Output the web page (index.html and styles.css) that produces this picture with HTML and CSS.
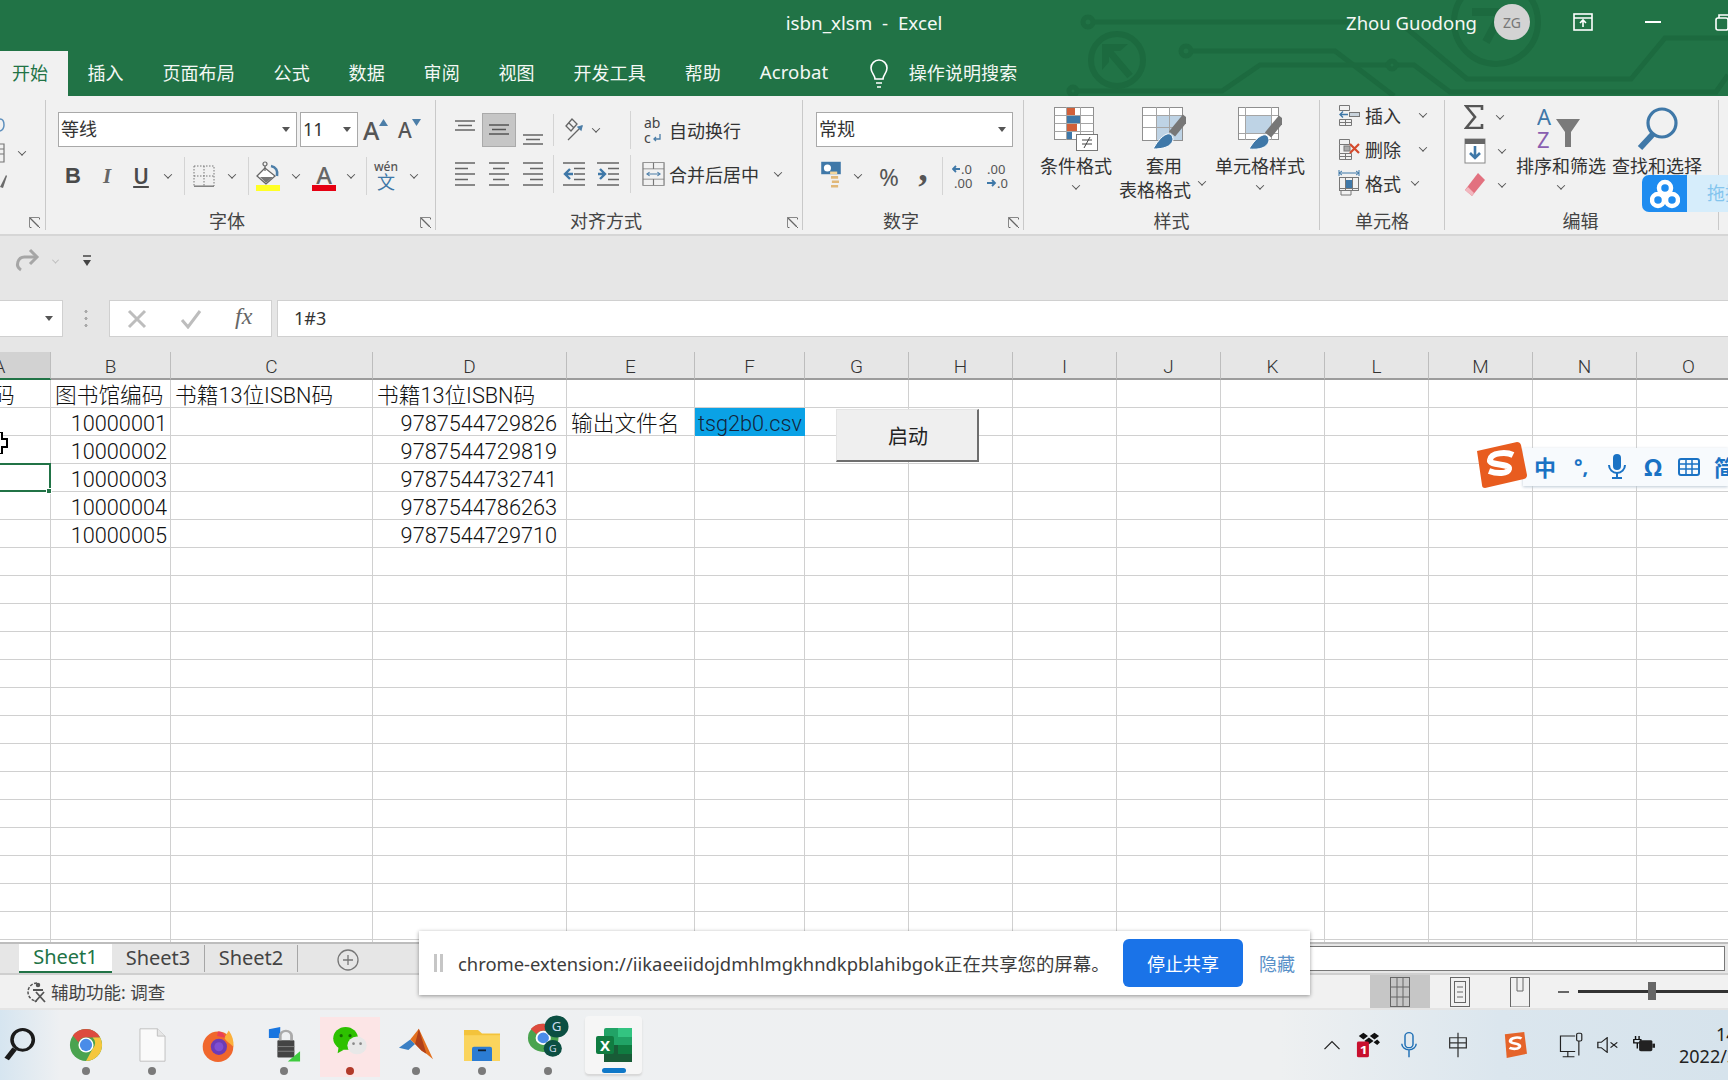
FILE: index.html
```html
<!DOCTYPE html>
<html lang="zh-CN">
<head>
<meta charset="utf-8">
<title>isbn_xlsm - Excel</title>
<link rel="stylesheet" href="styles.css">
</head>
<body>
<div class="app">
  <header class="chrome">
    <svg class="circuit" viewBox="0 0 1728 96" width="1728" height="96" fill="none" stroke="#1c6a3f" stroke-width="5">
      <circle cx="1088" cy="22" r="5"/><path d="M1093 22H1350"/>
      <circle cx="1117" cy="60" r="26" stroke-width="6"/><path d="M1130 76L1108 50" stroke-width="7"/><path d="M1102 70V44h26l-8 7h-11v11z" fill="#1c6a3f" stroke="none"/>
      <circle cx="1186" cy="51" r="5"/><path d="M1191 51H1335L1394 96"/>
      <circle cx="1073" cy="91" r="4"/><path d="M1077 91H1222L1260 65H1388M1396 65h18L1450 92H1716L1728 75"/><circle cx="1392" cy="65" r="4"/>
      <circle cx="1496" cy="22" r="42" stroke-width="6"/><path d="M1472 12h30l-16 30" stroke-width="8"/>
      <path d="M1405 27L1467 79H1631L1665 38H1728"/>
    </svg>
    <div class="titlebar">
      <span class="doc-title">isbn_xlsm&nbsp; -&nbsp; Excel</span>
      <div class="account">
        <span class="user">Zhou Guodong</span>
        <span class="avatar">ZG</span>
        <span class="winbtn"><svg width="20" height="18" viewBox="0 0 20 18" fill="none" stroke="#fff" stroke-width="1.6"><rect x="1" y="1" width="18" height="16"/><path d="M1 5h18M10 14V7M7 10l3-3 3 3"/></svg></span>
        <span class="winbtn"><svg width="16" height="2" viewBox="0 0 16 2"><rect width="16" height="2" fill="#fff"/></svg></span>
        <span class="winbtn"><svg width="16" height="18" viewBox="0 0 16 18" fill="none" stroke="#fff" stroke-width="1.6"><rect x="1" y="5" width="12" height="12" rx="2"/><path d="M4 5V2h11v11h-2"/></svg></span>
      </div>
    </div>
    <nav class="tabs">
      <span class="tab tab-active">开始</span>
      <span class="tab">插入</span>
      <span class="tab">页面布局</span>
      <span class="tab">公式</span>
      <span class="tab">数据</span>
      <span class="tab">审阅</span>
      <span class="tab">视图</span>
      <span class="tab">开发工具</span>
      <span class="tab">帮助</span>
      <span class="tab tab-latin">Acrobat</span>
      <span class="tab tab-search">
        <svg width="20" height="30" viewBox="0 0 20 30" fill="none" stroke="#fff" stroke-width="1.6"><path d="M6 20c0-4-4-6-4-11a8 8 0 0 1 16 0c0 5-4 7-4 11zM7 24h6M8 28h4"/></svg>
        操作说明搜索
      </span>
    </nav>
  </header>

  <section class="ribbon">
    <div class="group g-clip">
      <div class="clip-items">
        <svg width="6" height="14" viewBox="0 0 6 14" fill="none" stroke="#5d8fbd" stroke-width="1.5"><path d="M0 1c3 0 4 3 4 6s-1 5-4 6"/></svg>
        <div class="row-center"><svg width="5" height="20" viewBox="0 0 5 20" fill="none" stroke="#777" stroke-width="1.2"><path d="M0 1h4v18H0M0 6h4M0 11h4"/></svg><span class="chev chev-clip"></span></div>
        <svg width="7" height="14" viewBox="0 0 7 14" fill="#6b6b6b"><path d="M0 13l6-12 1 1-4 12z"/></svg>
      </div>
      <span class="launcher launcher-end"></span>
    </div>

    <div class="group g-font">
      <div class="ctl-row">
        <div class="combo combo-font">等线<span class="drop"></span></div>
        <div class="combo combo-size">11<span class="drop"></span></div>
        <span class="grow-a">A<svg width="9" height="7" viewBox="0 0 9 7"><path d="M4.5 0L9 7H0z" fill="#4c7ea8"/></svg></span>
        <span class="grow-a small-a">A<svg width="9" height="7" viewBox="0 0 9 7"><path d="M4.5 7L9 0H0z" fill="#4c7ea8"/></svg></span>
      </div>
      <div class="ctl-row row2">
        <span class="ib w34 b-btn">B</span>
        <span class="ib w34 i-btn">I</span>
        <span class="ib w34 u-btn">U</span>
        <span class="ib w20"><span class="chev"></span></span>
        <span class="vsep"></span>
        <span class="ib w36"><svg width="22" height="22" viewBox="0 0 22 22" fill="none" stroke="#777" stroke-width="1" stroke-dasharray="1.5 1.5"><path d="M1 1h20v20M1 1v20M11 1v20M1 11h20"/><path d="M1 21.2h20" stroke-dasharray="none" stroke-width="1.4"/></svg></span>
        <span class="ib w20"><span class="chev"></span></span>
        <span class="vsep"></span>
        <span class="ib w36"><svg width="24" height="32" viewBox="0 0 24 32"><path d="M9 8L1 16l9 8 9-8z" fill="#fff" stroke="#666" stroke-width="1.3"/><path d="M4 17h13l-7 6z" fill="#777"/><circle cx="9" cy="4" r="2" fill="none" stroke="#666" stroke-width="1.2"/><path d="M9 6v5" stroke="#666" stroke-width="1.2"/><path d="M15 6c5 1 7 5 6 10" fill="none" stroke="#4c7ea8" stroke-width="2.6"/><rect x="0" y="25" width="24" height="6" fill="#ffff26"/></svg></span>
        <span class="ib w20"><span class="chev"></span></span>
        <span class="color-a">A</span>
        <span class="ib w20 chev-color"><span class="chev"></span></span>
        <span class="vsep vsep-wen"></span>
        <span class="ib w36 wen"><small>wén</small><b>文</b></span>
        <span class="ib w20"><span class="chev"></span></span>
      </div>
      <div class="group-label">字体</div>
      <span class="launcher"></span>
    </div>

    <div class="group g-align">
      <div class="ctl-row a-row1">
        <span class="ib w34 icon-top"><svg width="20" height="12" viewBox="0 0 20 12" stroke="#666" stroke-width="1.4"><path d="M0 1h20M3 5.5h14M0 10h20"/></svg></span>
        <span class="ib w34 sel-align"><svg width="20" height="12" viewBox="0 0 20 12" stroke="#555" stroke-width="1.4"><path d="M0 1h20M3 5.5h14M0 10h20"/></svg></span>
        <span class="ib w34 icon-bot"><svg width="20" height="12" viewBox="0 0 20 12" stroke="#666" stroke-width="1.4"><path d="M0 1h20M3 5.5h14M0 10h20"/></svg></span>
        <span class="vsep short"></span>
        <span class="ib w26"><svg width="22" height="28" viewBox="0 0 22 28" fill="none" stroke="#666" stroke-width="1.3"><path d="M3 10l6-7 5 5-6 7zM6 7l5 5M5 24l14-14"/><path d="M19 10l-1 4-3-3z" fill="#4c7ea8" stroke="#4c7ea8"/></svg></span>
        <span class="ib w18"><span class="chev"></span></span>
        <span class="vsep vsep-wrap"></span>
        <span class="ib w30 wrap-ic"><svg width="20" height="32" viewBox="0 0 20 32"><text x="1" y="14" font-size="14" fill="#444" font-family="Noto Sans">ab</text><text x="1" y="29" font-size="14" fill="#444" font-family="Noto Sans">c</text><path d="M17 20v5h-6m2-2l-2 2 2 2" fill="none" stroke="#4c7ea8" stroke-width="1.3"/></svg></span>
        <span class="act-text">自动换行</span>
      </div>
      <div class="ctl-row a-row2">
        <span class="ib w34"><svg width="20" height="24" viewBox="0 0 20 24" stroke="#666" stroke-width="1.4"><path d="M0 1h20M0 6.5h13M0 12h20M0 17.5h13M0 23h20"/></svg></span>
        <span class="ib w34"><svg width="20" height="24" viewBox="0 0 20 24" stroke="#666" stroke-width="1.4"><path d="M0 1h20M4 6.5h12M0 12h20M4 17.5h12M0 23h20"/></svg></span>
        <span class="ib w34"><svg width="20" height="24" viewBox="0 0 20 24" stroke="#666" stroke-width="1.4"><path d="M0 1h20M7 6.5h13M0 12h20M7 17.5h13M0 23h20"/></svg></span>
        <span class="vsep vsep-in"></span>
        <span class="ib w34"><svg width="22" height="24" viewBox="0 0 22 24" stroke="#666" stroke-width="1.4" fill="none"><path d="M0 1h22M11 6.5h11M11 12h11M11 17.5h11M0 23h22"/><path d="M7 7l-5 5 5 5M2 12h8" stroke="#3f78a8" stroke-width="2.4"/></svg></span>
        <span class="ib w34"><svg width="22" height="24" viewBox="0 0 22 24" stroke="#666" stroke-width="1.4" fill="none"><path d="M0 1h22M11 6.5h11M11 12h11M11 17.5h11M0 23h22"/><path d="M3 7l5 5-5 5M8 12H1" stroke="#3f78a8" stroke-width="2.4"/></svg></span>
        <span class="vsep vsep-merge"></span>
        <span class="ib w30 wrap-ic"><svg width="23" height="24" viewBox="0 0 24 38" preserveAspectRatio="none" fill="none" stroke="#777" stroke-width="1.2"><rect x="1" y="1" width="22" height="36"/><path d="M1 11h22M1 27h22M12 1v10M12 27v10"/><path d="M5 19h14M8 16l-3 3 3 3M16 16l3 3-3 3" stroke="#4c7ea8"/></svg></span>
        <span class="act-text">合并后居中</span>
        <span class="ib w30 chev-merge"><span class="chev"></span></span>
      </div>
      <div class="group-label">对齐方式</div>
      <span class="launcher"></span>
    </div>

    <div class="group g-num">
      <div class="ctl-row">
        <div class="combo combo-num">常规<span class="drop"></span></div>
      </div>
      <div class="ctl-row row2">
        <span class="ib w30 currency"><svg width="26" height="32" viewBox="0 0 26 36"><rect x="2" y="2" width="22" height="14" fill="#3f78a8"/><circle cx="9" cy="9" r="4" fill="#fff"/><rect x="12" y="13" width="8" height="3" fill="#f3d59b"/><path d="M13 18h8v3h-8zM14 23h8v3h-8zM13 28h8v3h-8z" fill="#e1b878"/></svg></span>
        <span class="ib w20 chev-cur"><span class="chev"></span></span>
        <span class="pct">%</span>
        <span class="comma">,</span>
        <span class="vsep"></span>
        <span class="ib w34 decs"><svg width="24" height="28" viewBox="0 0 24 28"><text x="9" y="12" font-size="13" fill="#555" font-family="Noto Sans">.0</text><text x="2" y="26" font-size="13" fill="#555" font-family="Noto Sans">.00</text><path d="M8 7H1m3-3L1 7l3 3" fill="none" stroke="#3f78a8" stroke-width="1.8"/></svg></span>
        <span class="ib w34 decs"><svg width="24" height="28" viewBox="0 0 24 28"><text x="3" y="12" font-size="13" fill="#555" font-family="Noto Sans">.00</text><text x="13" y="26" font-size="13" fill="#555" font-family="Noto Sans">.0</text><path d="M3 21h8m-3-3l3 3-3 3" fill="none" stroke="#3f78a8" stroke-width="1.8"/></svg></span>
      </div>
      <div class="group-label">数字</div>
      <span class="launcher"></span>
    </div>

    <div class="group g-style">
      <div class="big-row">
        <div class="big big-cond">
          <svg width="44" height="44" viewBox="0 0 44 44"><rect x=".5" y=".5" width="39" height="32" fill="#fff" stroke="#8f8f8f"/><path d="M.5 8.500h39M.5 16.500h39M.5 24.500h39M12.500 0v33M26.500 0v33" stroke="#a5a5a5" fill="none"/><rect x="13" y="1" width="8" height="7" fill="#d1603a"/><rect x="13" y="9" width="13" height="7" fill="#3f78a8"/><rect x="13" y="17" width="10" height="7" fill="#d1603a"/><rect x="13" y="25" width="5" height="7" fill="#3f78a8"/><rect x="22.500" y="27.500" width="21" height="16" fill="#fff" stroke="#777"/><path d="M28 33h10M28 37h10M36 30l-6 11" stroke="#444" fill="none"/></svg>
          <span>条件格式</span><span class="chev"></span>
        </div>
        <div class="big big-table">
          <svg class="off-right" width="44" height="44" viewBox="0 0 44 44"><rect x=".5" y=".5" width="40" height="33" fill="#fff" stroke="#8f8f8f"/><rect x="14" y="8" width="26" height="25" fill="#bed3e5"/><path d="M1 8.500h39M1 20.500h39M14.500 0v33M27.500 0v33" stroke="#a5a5a5" fill="none"/><path d="M44 10L30 27" stroke="#777" stroke-width="8"/><path d="M25 27c3-1 6 1 6 6-2 7-10 9-20 9 3-5 8-13 14-15z" fill="#3f78a8" stroke="#fff"/></svg>
          <span class="off-right">套用</span><span class="two-line">表格格式<span class="chev chev-in"></span></span>
        </div>
        <div class="big big-cell">
          <svg width="44" height="44" viewBox="0 0 44 44"><rect x=".5" y=".5" width="40" height="32" fill="#fff" stroke="#8f8f8f"/><rect x="7" y="8" width="27" height="18" fill="#bed3e5"/><path d="M1 8.500h39M1 26.500h39M7.500 0v33M33.500 0v33" stroke="#a5a5a5" fill="none"/><path d="M44 11L30 28" stroke="#777" stroke-width="8"/><path d="M25 28c3-1 6 1 6 6-2 7-10 9-20 8 3-5 8-12 14-14z" fill="#3f78a8" stroke="#fff"/></svg>
          <span>单元格样式</span><span class="chev"></span>
        </div>
      </div>
      <div class="group-label">样式</div>
    </div>

    <div class="group g-cells">
      <div class="cell-list">
        <div class="cell-item"><svg width="22" height="22" viewBox="0 0 22 22" fill="none" stroke="#777"><path d="M1.500 1.500h10v5h-10zM1.500 15.500h12v6h-12zM7.500 15.500v6M1.500 18.500h12"/><rect x="11.500" y="8.500" width="10" height="4" fill="#c9d3dc"/><path d="M10 10.500H2m3-3l-3 3 3 3" stroke="#3f78a8" stroke-width="1.4"/></svg><span>插入</span><span class="chev"></span></div>
        <div class="cell-item"><svg width="22" height="22" viewBox="0 0 22 22" fill="none" stroke="#777"><path d="M1.500 1.500h10v5h-10zM1.500 15.500h12v6h-12zM7.500 15.500v6M1.500 18.500h12M1.500 6.500v9"/><rect x="6" y="8" width="6" height="5" fill="#aaa"/><path d="M12 6l9 9M21 6l-9 9" stroke="#d44a2c" stroke-width="2.2"/></svg><span>删除</span><span class="chev"></span></div>
        <div class="cell-item cell-fmt"><svg width="22" height="26" viewBox="0 0 22 26" fill="none" stroke="#777"><path d="M1 3h20M1 0v6M21 0v6M4 1L1 3l3 2M18 1l3 2-3 2" stroke="#3f78a8"/><rect x="1.500" y="7.500" width="19" height="13"/><path d="M7.500 7v14M14.500 7v14M1 18.500h20M3 21v4h10v-4"/><rect x="8" y="10" width="6" height="8" fill="#3f78a8" stroke="none"/></svg><span>格式</span><span class="chev"></span></div>
      </div>
      <div class="group-label">单元格</div>
    </div>

    <div class="group g-edit">
      <div class="edit-body">
        <div class="edit-list">
          <div class="edit-item"><svg width="20" height="24" viewBox="0 0 20 24"><path d="M18 5V1H2l9 11-9 11h16v-4" fill="none" stroke="#555" stroke-width="2.6"/></svg><span class="chev"></span></div>
          <div class="edit-item"><svg width="22" height="26" viewBox="0 0 22 26"><rect x="1" y="1" width="20" height="24" fill="#fff" stroke="#888"/><rect x="1" y="1" width="20" height="5" fill="#666"/><path d="M11 8v12M6 15l5 5 5-5" fill="none" stroke="#3f78a8" stroke-width="2.6"/></svg><span class="chev"></span></div>
          <div class="edit-item"><svg width="22" height="26" viewBox="0 0 22 26"><path d="M14 1l7 7-13 16-7-6z" fill="#e2717f"/><path d="M1 18l7 6 2-3-6-6z" fill="#f2b7bf"/></svg><span class="chev"></span></div>
        </div>
        <div class="big big-sort">
          <svg width="48" height="44" viewBox="0 0 48 44"><text x="0" y="19" font-size="22" fill="#3f78a8" font-family="Noto Sans">A</text><text x="0" y="42" font-size="22" fill="#8a5fb0" font-family="Noto Sans">Z</text><path d="M19 13h24l-9 13v15h-6V26z" fill="#7a7a7a"/></svg>
          <span>排序和筛选</span><span class="chev"></span>
        </div>
        <div class="big big-find">
          <svg width="44" height="46" viewBox="0 0 44 46" fill="none"><circle cx="27" cy="17" r="14" stroke="#3f78a8" stroke-width="3.2"/><path d="M18 28L5 42" stroke="#3f78a8" stroke-width="6"/></svg>
          <span>查找和选择</span>
        </div>
      </div>
      <div class="group-label">编辑</div>
    </div>
  </section>

  <section class="qat">
    <svg width="28" height="26" viewBox="0 0 28 26" fill="none" stroke="#a6a6a6" stroke-width="3"><path d="M22 9H11a7 7 0 0 0-4 13"/><path d="M16 2l7 7-7 7" stroke-width="3"/></svg>
    <span class="chev chev-qat"></span>
    <svg class="qat-more" width="10" height="12" viewBox="0 0 10 12"><path d="M1 1h8" stroke="#444" stroke-width="1.5"/><path d="M1 5h8L5 11z" fill="#444"/></svg>
  </section>

  <section class="formula">
    <div class="namebox"><span class="drop"></span></div>
    <div class="fx-grip"></div>
    <div class="fx-btns">
      <svg width="20" height="20" viewBox="0 0 20 20" stroke="#bdbdbd" stroke-width="3"><path d="M2 2l16 16M18 2L2 18"/></svg>
      <svg width="22" height="20" viewBox="0 0 22 20" fill="none" stroke="#bdbdbd" stroke-width="3"><path d="M2 11l6 7L20 2"/></svg>
      <span class="fx">fx</span>
    </div>
    <div class="fx-input">1#3</div>
  </section>

  <section class="sheet">
    <div class="row row-head">
      <b class="head-a">A</b><b>B</b><b>C</b><b>D</b><b>E</b><b>F</b><b>G</b><b>H</b><b>I</b><b>J</b><b>K</b><b>L</b><b>M</b><b>N</b><b>O</b>
    </div>
    <div class="row"><i class="clip-a">图书编码</i><i>图书馆编码</i><i>书籍13位ISBN码</i><i>书籍13位ISBN码</i><i></i><i></i><i></i><i></i><i></i><i></i><i></i><i></i><i></i><i></i><i></i></div>
    <div class="row"><i></i><i class="num">10000001</i><i></i><i class="num num-d">9787544729826</i><i>输出文件名</i><i class="blue">tsg2b0.csv</i><i></i><i></i><i></i><i></i><i></i><i></i><i></i><i></i><i></i></div>
    <div class="row"><i></i><i class="num">10000002</i><i></i><i class="num num-d">9787544729819</i><i></i><i></i><i></i><i></i><i></i><i></i><i></i><i></i><i></i><i></i><i></i></div>
    <div class="row"><i class="active"><u class="handle"></u></i><i class="num">10000003</i><i></i><i class="num num-d">9787544732741</i><i></i><i></i><i></i><i></i><i></i><i></i><i></i><i></i><i></i><i></i><i></i></div>
    <div class="row"><i></i><i class="num">10000004</i><i></i><i class="num num-d">9787544786263</i><i></i><i></i><i></i><i></i><i></i><i></i><i></i><i></i><i></i><i></i><i></i></div>
    <div class="row"><i></i><i class="num">10000005</i><i></i><i class="num num-d">9787544729710</i><i></i><i></i><i></i><i></i><i></i><i></i><i></i><i></i><i></i><i></i><i></i></div>
    <div class="row"><i></i><i></i><i></i><i></i><i></i><i></i><i></i><i></i><i></i><i></i><i></i><i></i><i></i><i></i><i></i></div>
    <div class="row"><i></i><i></i><i></i><i></i><i></i><i></i><i></i><i></i><i></i><i></i><i></i><i></i><i></i><i></i><i></i></div>
    <div class="row"><i></i><i></i><i></i><i></i><i></i><i></i><i></i><i></i><i></i><i></i><i></i><i></i><i></i><i></i><i></i></div>
    <div class="row"><i></i><i></i><i></i><i></i><i></i><i></i><i></i><i></i><i></i><i></i><i></i><i></i><i></i><i></i><i></i></div>
    <div class="row"><i></i><i></i><i></i><i></i><i></i><i></i><i></i><i></i><i></i><i></i><i></i><i></i><i></i><i></i><i></i></div>
    <div class="row"><i></i><i></i><i></i><i></i><i></i><i></i><i></i><i></i><i></i><i></i><i></i><i></i><i></i><i></i><i></i></div>
    <div class="row"><i></i><i></i><i></i><i></i><i></i><i></i><i></i><i></i><i></i><i></i><i></i><i></i><i></i><i></i><i></i></div>
    <div class="row"><i></i><i></i><i></i><i></i><i></i><i></i><i></i><i></i><i></i><i></i><i></i><i></i><i></i><i></i><i></i></div>
    <div class="row"><i></i><i></i><i></i><i></i><i></i><i></i><i></i><i></i><i></i><i></i><i></i><i></i><i></i><i></i><i></i></div>
    <div class="row"><i></i><i></i><i></i><i></i><i></i><i></i><i></i><i></i><i></i><i></i><i></i><i></i><i></i><i></i><i></i></div>
    <div class="row"><i></i><i></i><i></i><i></i><i></i><i></i><i></i><i></i><i></i><i></i><i></i><i></i><i></i><i></i><i></i></div>
    <div class="row"><i></i><i></i><i></i><i></i><i></i><i></i><i></i><i></i><i></i><i></i><i></i><i></i><i></i><i></i><i></i></div>
    <div class="row"><i></i><i></i><i></i><i></i><i></i><i></i><i></i><i></i><i></i><i></i><i></i><i></i><i></i><i></i><i></i></div>
    <div class="row"><i></i><i></i><i></i><i></i><i></i><i></i><i></i><i></i><i></i><i></i><i></i><i></i><i></i><i></i><i></i></div>
    <div class="row"><i></i><i></i><i></i><i></i><i></i><i></i><i></i><i></i><i></i><i></i><i></i><i></i><i></i><i></i><i></i></div>
  </section>

  <section class="sheetbar">
    <span class="stab stab-active">Sheet1</span>
    <span class="stab">Sheet3</span>
    <span class="stab">Sheet2</span>
    <span class="add-sheet"><svg width="22" height="22" viewBox="0 0 22 22" fill="none" stroke="#777" stroke-width="1.3"><circle cx="11" cy="11" r="10"/><path d="M11 6v10M6 11h10"/></svg></span>
    <span class="hscroll"></span>
  </section>

  <section class="status">
    <svg width="24" height="24" viewBox="0 0 24 24" fill="none" stroke="#555" stroke-width="1.5"><path d="M12 3a9 9 0 1 0 0 18" stroke-dasharray="3 1.5"/><path d="M8 10h10M11 12l9 10M19 12l-9 10" stroke-width="1.8"/><circle cx="13" cy="5" r="1.5" fill="#555"/></svg>
    <span class="acc">辅助功能: 调查</span>
    <div class="views">
      <span class="view view-on"><svg width="20" height="30" viewBox="0 0 20 30" fill="none" stroke="#666"><rect x=".5" y=".5" width="19" height="29"/><path d="M7 0v30M13 0v30M0 10h20M0 20h20"/></svg></span>
      <span class="view"><svg width="20" height="30" viewBox="0 0 20 30" fill="none" stroke="#666"><rect x=".5" y=".5" width="19" height="29"/><rect x="4.500" y="4.500" width="11" height="21"/><path d="M7 10h6M7 15h6M7 20h6"/></svg></span>
      <span class="view"><svg width="20" height="30" viewBox="0 0 20 30" fill="none" stroke="#666"><path d="M.5 30V.5h19V30H.5M7 0v14h6V0"/></svg></span>
    </div>
    <div class="zoomer"><span class="minus"></span><span class="slider"><span class="thumb"></span></span></div>
  </section>

  <footer class="taskbar">
    <div class="tb-apps">
      <span class="tb-app tb-search"><svg width="32" height="34" viewBox="0 0 36 46" preserveAspectRatio="none" fill="none" stroke="#1b1b1b"><ellipse cx="21" cy="16" rx="12" ry="14" stroke-width="4"/><path d="M12 28L3 42" stroke-width="6"/></svg></span>
      <span class="tb-app dot"><svg width="34" height="34" viewBox="0 0 36 36"><circle cx="18" cy="18" r="17" fill="#4aa34f"/><path d="M18 1a17 17 0 0 1 15 9H18a8 8 0 0 0-8 5L4 8A17 17 0 0 1 18 1z" fill="#dd4b3e"/><path d="M33 10a17 17 0 0 1-15 25l7-13a8 8 0 0 0 0-12z" fill="#f5c73d"/><circle cx="18" cy="18" r="8" fill="#fff"/><circle cx="18" cy="18" r="6.500" fill="#4a8ce8"/></svg></span>
      <span class="tb-app dot"><svg width="27" height="34" viewBox="0 0 28 42" preserveAspectRatio="none"><path d="M1 1h18l8 9v31H1z" fill="#fafafa" stroke="#bbb"/><path d="M19 1v9h8" fill="#e6e6e6" stroke="#bbb"/></svg></span>
      <span class="tb-app"><svg width="36" height="36" viewBox="0 0 36 40"><circle cx="18" cy="22" r="17" fill="#f0672d"/><path d="M30 4c4 6 6 12 5 18-4-4-8-6-10-10z" fill="#fbb03b"/><path d="M18 5c5 0 7 3 8 7l-9-2z" fill="#e94057"/><circle cx="19" cy="22" r="9" fill="#6d3bb5"/><circle cx="19" cy="22" r="5" fill="#7f4fd1"/></svg></span>
      <span class="tb-app dot"><svg width="34" height="36" viewBox="0 0 36 46" preserveAspectRatio="none"><path d="M2 3l12-3v14H2z" fill="#1976e0"/><rect x="11" y="17" width="18" height="22" rx="1" fill="#444"/><path d="M11 25h18M11 31h18" stroke="#888"/><path d="M14 17v-6a6 6 0 0 1 12 0v6" fill="none" stroke="#aaa" stroke-width="3"/><path d="M22 44l13-13v13z" fill="#3ecb3e"/></svg></span>
      <span class="tb-app tb-wechat dot dot-red"><svg width="38" height="30" viewBox="0 0 40 34"><ellipse cx="15" cy="14" rx="14" ry="13" fill="#2dc100"/><path d="M7 24l-1 7 7-4z" fill="#2dc100"/><ellipse cx="28" cy="22" rx="11" ry="10" fill="#e8e8e8"/><circle cx="10" cy="11" r="1.800" fill="#146b00"/><circle cx="20" cy="11" r="1.800" fill="#146b00"/><circle cx="24" cy="20" r="1.500" fill="#888"/><circle cx="32" cy="20" r="1.500" fill="#888"/></svg></span>
      <span class="tb-app dot"><svg width="36" height="35" viewBox="0 0 38 46" preserveAspectRatio="none"><path d="M1 26l12-11 5 6-7 8z" fill="#3a7fc4"/><path d="M13 15l9-14 15 40-7-7-5-4-7-9z" fill="#e2701f"/><path d="M22 1l-4 20 7 9 5 4z" fill="#b1411a"/></svg></span>
      <span class="tb-app dot"><svg width="36" height="32" viewBox="0 0 36 36" preserveAspectRatio="none"><path d="M0 1h14l4 4h18v31H0z" fill="#f3c33b"/><rect y="7" width="36" height="29" fill="#fad45d"/><path d="M8 36V22a2 2 0 0 1 2-2h16a2 2 0 0 1 2 2v14z" fill="#2b7cd3"/><rect x="14" y="23" width="8" height="2" fill="#123"/></svg></span>
      <span class="tb-app dot"><svg class="chrome-g" width="42" height="44" viewBox="0 0 44 50" preserveAspectRatio="none"><circle cx="17" cy="26" r="16" fill="#4aa34f"/><path d="M17 10a16 16 0 0 1 14 8H17a8 8 0 0 0-7 4L4 16a16 16 0 0 1 13-6z" fill="#dd4b3e"/><circle cx="17" cy="26" r="7" fill="#4a8ce8" stroke="#fff" stroke-width="2"/><circle cx="31" cy="13" r="12.500" fill="#0b4f42"/><text x="26" y="18" font-size="14" fill="#cde" font-family="Noto Sans">G</text><circle cx="27" cy="38" r="9.500" fill="#0b4f42"/><text x="23" y="42" font-size="11" fill="#cde" font-family="Noto Sans">G</text></svg></span>
      <span class="tb-app tb-excel"><svg width="36" height="34" viewBox="0 0 36 34"><rect x="8" y="0" width="28" height="34" rx="2" fill="#21a366"/><rect x="22" y="0" width="14" height="9" fill="#33c481"/><rect x="22" y="17" width="14" height="9" fill="#107c41"/><rect x="8" y="17" width="14" height="17" fill="#185c37"/><rect x="22" y="26" width="14" height="8" fill="#185c37"/><rect y="8" width="18" height="18" rx="2" fill="#107c41"/><text x="4" y="23" font-size="15" fill="#fff" font-family="Noto Sans" font-weight="700">X</text></svg><span class="pill"></span></span>
    </div>
    <div class="tray">
      <span class="tr t-chev"><svg width="18" height="10" viewBox="0 0 20 12" fill="none" stroke="#222" stroke-width="1.5"><path d="M1 11l9-9 9 9"/></svg></span>
      <span class="tr t-notif"><svg width="24" height="26" viewBox="0 0 26 38" preserveAspectRatio="none"><path d="M8 1l5 5-5 5-5-5zM20 1l5 5-5 5-5-5zM14 8l5 5-5 5-5-5zM23 11l3 4-3 4-4-4z" fill="#111"/><rect x="1" y="14" width="13" height="23" rx="2" fill="#c8102e"/><text x="4" y="32" font-size="15" font-weight="700" fill="#fff" font-family="Noto Sans">1</text></svg></span>
      <span class="tr t-mic"><svg width="16" height="26" viewBox="0 0 20 38" preserveAspectRatio="none" fill="none" stroke="#1f6fb5" stroke-width="1.8"><rect x="5" y="1" width="10" height="22" rx="5"/><path d="M1 17a9 9 0 0 0 18 0M10 27v10"/></svg></span>
      <span class="tr t-ime"><svg width="20" height="26" viewBox="0 0 24 36" preserveAspectRatio="none" fill="none" stroke="#333" stroke-width="1.5"><path d="M2 8h20v14H2zM2 15h20M12 1v34"/></svg></span>
      <span class="tr t-sogou"><svg width="24" height="26" viewBox="0 0 26 36" preserveAspectRatio="none"><path d="M2 3l21-3 3 30-22 6z" fill="#e5642a"/><path d="M20 9c-3-2-11-2-12 3-1 5 11 3 10 8-1 4-7 4-11 2" fill="none" stroke="#fff" stroke-width="3.600"/></svg></span>
      <span class="tr t-net"><svg width="25" height="26" viewBox="0 0 34 40" preserveAspectRatio="none" fill="none" stroke="#222" stroke-width="1.600"><path d="M22 6H2v24h20"/><path d="M12 30v8M5 38h16"/><rect x="24" y="2" width="7" height="12" rx="2"/><path d="M27 14v22"/></svg></span>
      <span class="tr t-vol"><svg width="22" height="16" viewBox="0 0 26 24" preserveAspectRatio="none" fill="none" stroke="#222" stroke-width="1.500"><path d="M1 8h4l7-7v22l-7-7H1z"/><path d="M16 8l8 8M24 8l-8 8"/></svg></span>
      <span class="tr t-pow"><svg width="23" height="18" viewBox="0 0 26 26" preserveAspectRatio="none"><path d="M4 0v5M8 0v5M2 5h8v5H2zM6 10v8" stroke="#111" stroke-width="1.600" fill="none"/><rect x="8" y="6" width="15" height="16" rx="2" fill="#222"/><rect x="23" y="11" width="3" height="6" fill="#222"/></svg></span>
      <div class="clock"><span class="clock-time">14</span><span>2022/3</span></div>
    </div>
  </footer>

  <div class="vb-button">启动</div>

  <div class="baidu">
    <span class="baidu-logo"><svg width="30" height="30" viewBox="0 0 30 30" fill="none" stroke="#fff" stroke-width="4.500"><circle cx="15" cy="9" r="6"/><circle cx="8" cy="21" r="6"/><circle cx="22" cy="21" r="6"/></svg></span>
    <span class="baidu-text">拖拽</span>
  </div>

  <div class="sogou">
    <svg class="sogou-logo" width="50" height="46" viewBox="0 0 50 46"><path d="M0 9L40 0q3 0 4 3l6 30q0 3-3 4L8 46q-3 0-3-3z" fill="#e85c1f"/><path d="M36 13c-6-3-22-3-23 5-1 6 20 3 19 9-1 5-12 5-20 2" fill="none" stroke="#fff" stroke-width="6"/></svg>
    <div class="sogou-bar">
      <span class="so-item">中</span>
      <span class="so-item so-dot">°,</span>
      <span class="so-item"><svg width="18" height="26" viewBox="0 0 18 26" fill="#1a72c4"><rect x="5" y="0" width="8" height="16" rx="4"/><path d="M1 11a8 8 0 0 0 16 0" fill="none" stroke="#1a72c4" stroke-width="2"/><rect x="8" y="19" width="2" height="5"/><rect x="4" y="23" width="10" height="2"/></svg></span>
      <span class="so-item so-omega">Ω</span>
      <span class="so-item"><svg width="22" height="18" viewBox="0 0 22 18" fill="none" stroke="#1a72c4" stroke-width="2"><rect x="1" y="1" width="20" height="16" rx="2"/><path d="M1 6h20M1 11h20M8 1v15M14 1v15" stroke-width="1.500"/></svg></span>
      <span class="so-item">简</span>
    </div>
  </div>

  <svg class="cursor" width="9" height="22" viewBox="0 0 9 22"><path d="M0 0h3v7h5v8H3v7H0z" fill="#fff" stroke="#000" stroke-width="2"/></svg>

  <div class="share">
    <span class="pause"></span>
    <span class="share-text">chrome-extension://iikaeeiidojdmhlmgkhndkpblahibgok正在共享您的屏幕。</span>
    <span class="stop">停止共享</span>
    <span class="hide">隐藏</span>
  </div>
</div>
</body>
</html>
```
FILE: styles.css
```css
*{box-sizing:border-box}
html,body{margin:0;padding:0;height:100%;overflow:hidden}
body{font-family:"Noto Sans","Noto Sans CJK SC",sans-serif;color:#333;font-size:18px;font-weight:400}
i,b,u{font-style:normal;font-weight:inherit;text-decoration:none}
.app{position:relative;width:1728px;height:1080px;overflow:hidden;display:flex;flex-direction:column;background:#e6e6e6}

/* title + tabs */
.chrome{position:relative;height:96px;background:#217346;color:#fff;flex:none;overflow:hidden}
.circuit{position:absolute;left:0;top:0}
.titlebar{position:relative;height:51px;display:flex;justify-content:center;align-items:flex-start;padding-top:10px}
.doc-title{font-size:18.8px;line-height:26px;color:#f4f8f5}
.account{position:absolute;right:-30px;top:4px;display:flex;align-items:center;height:36px}
.user{font-size:18.5px;margin-right:17px;color:#f4f8f5}
.avatar{width:36px;height:36px;border-radius:50%;background:#d3d3d3;color:#777;font-size:14px;display:flex;align-items:center;justify-content:center;margin-right:18px}
.winbtn{width:70px;display:flex;justify-content:center;align-items:center}
.tabs{position:relative;display:flex;height:45px;align-items:center}
.tab{padding:0 19.4px;font-size:18px;line-height:45px;color:#f4f8f5;white-space:nowrap;height:45px;letter-spacing:.1px}
.tab-latin{font-size:18.6px;line-height:42px}
.tab-active{background:#f1f1f1;color:#217346;padding:0 20px 0 12px;width:68px}
.tab-search{display:flex;align-items:center;gap:20px;padding-left:21px}

/* ribbon */
.ribbon{flex:none;height:140px;background:#f1f1f1;border-bottom:2px solid #d6d6d6;display:flex;padding:4px 0 5px}
.group{position:relative;border-right:1px solid #c9c9c9;display:flex;flex-direction:column;height:130px;padding-top:12px;flex:none}
.group-label{position:absolute;left:0;right:0;top:109px;height:24px;line-height:24px;text-align:center;font-size:18px;color:#444}
.launcher{position:absolute;right:4px;top:117px;width:11px;height:11px;border:1px solid #888;border-right-color:transparent;border-bottom-color:transparent;background:linear-gradient(45deg,transparent 44%,#666 45% 55%,transparent 56%)}
.launcher-end{right:5px}
.g-clip{width:46px}
.g-font{width:390px;padding-left:10px}
.g-align{width:367px;padding-left:12px}
.g-num{width:221px;padding-left:12px}
.g-style{width:296px}
.g-cells{width:125px}
.g-edit{width:274px}
.g-font .group-label{left:-27px}
.g-num .group-label{left:-24px}
.g-align .group-label{left:-26px}
.g-edit .group-label{left:-2px}
.clip-items{display:flex;flex-direction:column;gap:11px;margin-top:6px}
.row-center{display:flex;align-items:center}
.chev-clip{margin-left:14px}

.ctl-row{display:flex;align-items:center;height:35px;color:#444}
.row2{height:32px;margin-top:13px}
.combo{position:relative;height:35px;background:#fff;border:1px solid #a9a9a9;font-size:18px;line-height:33px;padding-left:2px;color:#333;flex:none}
.combo-font{width:239px;margin-left:2px}
.combo-size{width:58px;margin-left:3px}
.combo-num{width:197px;margin-left:1px}
.drop{position:absolute;right:6px;top:14px;width:0;height:0;border:4px solid transparent;border-top:5px solid #555;border-bottom:0}
.grow-a{display:flex;align-items:flex-start;font-size:25px;font-weight:500;line-height:30px;width:30px;margin-left:5px;color:#555}
.grow-a svg{margin-top:4px;flex:none}
.small-a{font-size:21px}
.ib{display:flex;align-items:center;justify-content:center;flex:none;height:32px}
.w18{width:18px}.w20{width:20px}.w26{width:26px}.w30{width:30px}.w34{width:34px}.w36{width:36px}
.chev{display:inline-block;width:6px;height:6px;border-right:1.4px solid #555;border-bottom:1.4px solid #555;transform:rotate(45deg) translate(-1px,-1px);flex:none}
.vsep{width:1px;height:38px;background:#d4d4d4;flex:none;margin:0 1px 0 6px}
.vsep.short{height:32px;margin:0 7px 0 3px}
.vsep-wen{margin-left:5px}
.vsep-wrap{margin:0 7px 0 25px}
.vsep-in{margin:0 3px}
.vsep-merge{margin:0 7px 0 5px}
.g-num .vsep{margin-right:6px}
.b-btn{font-weight:700;font-size:22px;font-family:"Liberation Sans",sans-serif;color:#4a4a4a}
.i-btn{font-style:italic;font-weight:700;font-size:21px;font-family:"Liberation Serif",serif;color:#666}
.u-btn{font-size:21px;font-weight:600;text-decoration:underline;font-family:"Noto Sans";color:#4a4a4a}
.color-a{width:24px;height:29px;margin:0 1px 0 6px;font-size:24px;font-weight:500;line-height:26px;text-align:center;color:#666;border-bottom:6px solid #e60012;flex:none}
.chev-color{margin-left:4px}
.wen{flex-direction:column;color:#3f78a8;line-height:1}
.wen small{font-size:12px;color:#555;font-weight:500}
.wen b{font-size:18px}
.icon-top{align-items:flex-start;padding-top:6px}
.icon-bot{align-items:flex-end}
.sel-align{background:#c6c6c6;border:1px solid #aaa;height:34px}
.a-row1{height:35px}
.a-row2{height:36px;margin-top:9px}
.act-text{font-size:18px;color:#333;margin-left:1px;white-space:nowrap}
.a-row2 .ib{height:36px}
.chev-merge{margin-left:4px}
.pct{font-size:24px;width:42px;text-align:center;color:#555}
.comma{font-size:38px;font-weight:700;font-family:"Liberation Serif",serif;width:26px;text-align:center;color:#555;line-height:14px;height:30px}
.currency{margin-left:1px}
.chev-cur{margin-left:2px}
.decs{margin-left:-2px}
.big-row{display:flex;align-items:flex-start;margin-top:-5px}
.big{display:flex;flex-direction:column;align-items:center;font-size:18px;line-height:24px;color:#333;flex:none;white-space:nowrap}
.big svg{margin-bottom:3px}
.big .chev{margin-top:6px}
.big-cond{width:92px;margin-left:6px}
.big-table{width:80px;margin-left:-7px}
.big-table .off-right{margin-left:18px}
.big-cell{width:92px;margin-left:19px}
.two-line{position:relative}
.big .chev-in{position:absolute;right:-14px;top:2px;margin:0}
.cell-list{display:flex;flex-direction:column;padding-left:18px;margin-top:-13px;gap:3px}
.cell-item{display:flex;align-items:center;height:31px;gap:5px;font-size:18px;color:#333}
.cell-item svg{flex:none}
.cell-item .chev{margin-left:14px}
.cell-fmt .chev{margin-left:6px}
.edit-body{display:flex;align-items:flex-start;margin-top:-6px}
.edit-list{display:flex;flex-direction:column;width:72px;padding-left:19px;gap:3px;flex:none;margin-top:-5px}
.edit-item{display:flex;align-items:center;height:31px;gap:13px}
.big-sort{width:92px;margin-left:-2px}
.big-sort svg{margin-bottom:4px}
.big-find{width:92px;margin-left:4px}
.big-find svg{margin-bottom:2px}

/* quick access */
.qat{flex:none;height:64px;display:flex;align-items:center;padding:0 0 14px 14px;background:#e6e6e6}
.chev-qat{width:5px;height:5px;border-color:#bbb;margin-left:11px}
.qat-more{margin-left:24px}

/* formula */
.formula{flex:none;height:52px;padding-bottom:15px;display:flex;background:#e6e6e6}
.namebox{position:relative;width:63px;background:#fff;border:1px solid #d0d0d0;border-left:0}
.namebox .drop{top:15px;right:9px}
.fx-grip{width:46px;background:radial-gradient(circle,#a9a9a9 1.4px,transparent 1.7px) center/4px 7px repeat-y;margin:6px 0}
.fx-btns{width:163px;background:#fff;border:1px solid #d0d0d0;display:flex;align-items:center;gap:33px;padding-left:17px}
.fx{font-family:"Liberation Serif",serif;font-style:italic;font-size:24px;color:#666;margin-top:-4px}
.fx-input{flex:1;margin-left:5px;background:#fff;border:1px solid #d0d0d0;border-right:0;padding-left:16px;font-size:18px;line-height:34px;color:#333}

/* sheet */
.sheet{flex:none;height:590px;overflow:hidden;background:#fff;margin-left:-51px;font-family:Roboto,"Noto Sans CJK SC",sans-serif;font-weight:300;font-size:21.7px;color:#111}
.row{display:grid;grid-template-columns:102px 120px 202px 194px 128px 110px 104px 104px 104px 104px 104px 104px 104px 104px 104px;grid-template-rows:28px;height:28px;width:1800px}
.row>i{display:block;border-right:1px solid #d0d0d0;border-bottom:1px solid #d0d0d0;line-height:31px;padding-left:4px;white-space:nowrap;position:relative;overflow:visible}
.row-head{background:#e6e6e6}
.row-head>b{display:block;text-align:center;font-size:19px;line-height:30px;color:#333;border-right:1px solid #bdbdbd;border-bottom:2px solid #9c9c9c;overflow:hidden}
.row-head>.head-a{background:#d2d2d2;border-bottom-color:#217346}
.row>.clip-a{padding-left:0;text-indent:-21px;overflow:hidden}
.row>.num{text-align:right;padding-right:3px}
.row>.num-d{padding-right:9px}
.row>.blue{background:#0aa2e6;color:#14243a;border-color:#0aa2e6;padding-left:3px}
.row>.active{border:2px solid #217346;border-left:0;margin-top:-1px}
.handle{position:absolute;right:-3px;bottom:-4px;background:#217346;border:1px solid #fff;box-sizing:content-box;width:4px;height:4px;z-index:2}

/* tabs at bottom */
.sheetbar{flex:none;height:33px;background:#e6e6e6;border-top:2px solid #bdbdbd;border-bottom:2px solid #cfcfcf;display:flex;padding-left:19px;position:relative}
.stab{width:93px;text-align:center;font-size:20px;line-height:26px;height:27px;color:#444;border-right:1px solid #a6a6a6;margin-top:1px}
.stab-active{background:#fff;color:#217346;border-bottom:2px solid #217346;height:29px;margin-top:0;border-right:0}
.add-sheet{margin-left:39px;margin-top:5px;display:block;height:22px}
.hscroll{position:absolute;left:1300px;right:3px;top:2px;height:25px;background:#fff;border:1px solid #777}

.status{flex:none;height:33px;background:#f1f1f1;display:flex;align-items:center;padding-left:25px}
.acc{font-size:17.5px;color:#444;margin-left:2px;white-space:nowrap}
.views{margin-left:1205px;display:flex;height:33px}
.view{width:60px;height:33px;display:flex;align-items:center;justify-content:center}
.view-on{background:#c6c6c6}
.zoomer{display:flex;align-items:center;flex:1}
.minus{width:11px;height:2px;background:#666;margin-left:8px}
.slider{position:relative;flex:1;height:2.5px;background:#333;margin-left:9px;display:block}
.thumb{position:absolute;left:70px;top:-8px;width:8px;height:18px;background:#666}

/* taskbar */
.taskbar{flex:none;height:72px;display:flex;justify-content:space-between;background:linear-gradient(90deg,#d6e5f0 0,#eef0f2 60px,#eef0f1 1280px,#dbe6ee 1500px,#d6e3ec 100%);border-top:2px solid #e4e4e4}
.tb-apps{display:flex;align-items:center}
.tb-app{position:relative;width:66px;height:70px;display:flex;align-items:center;justify-content:center;flex:none}
.tb-search{width:53px;padding-right:13px}
.chrome-g{margin-top:-16px}
.dot::after{content:"";position:absolute;left:50%;margin-left:-4px;bottom:5px;width:8px;height:8px;border-radius:50%;background:#7a7a7a}
.dot-red::after{background:#b23a2a}
.tb-wechat{background:#fce5e6;width:60px;margin:7px 3px 0;height:60px;align-self:flex-start;padding-bottom:12px}
.tb-wechat::after{bottom:2px}
.tb-excel{background:#f6f6f6;width:57px;margin-left:4px;height:58px;border-radius:4px;box-shadow:0 2px 2px #d6d6d6}
.pill{position:absolute;left:17px;bottom:1px;width:24px;height:5px;border-radius:3px;background:#0f78c8}
.tray{display:flex;align-items:center;height:70px;width:407px;flex:none}
.tr{display:flex;justify-content:center;align-items:center;flex:none;height:44px}
.t-chev{width:22px}
.t-notif{width:50px}
.t-mic{width:32px}
.t-ime{width:66px}
.t-sogou{width:48px}
.t-net{width:38px;margin-left:13px}
.t-vol{width:36px}
.t-pow{width:34px}
.clock{display:flex;flex-direction:column;align-items:flex-start;width:49px;margin-left:19px;font-size:18px;line-height:22px;color:#222;overflow:hidden;flex:none;white-space:nowrap}
.clock-time{margin-left:37px}

/* floating */
.vb-button{position:absolute;left:836px;top:409px;width:143px;height:53px;background:#efefef;border:1px solid #e4e4e4;border-right:2px solid #6e6e6e;border-bottom:2px solid #6e6e6e;font-size:20px;display:flex;align-items:center;justify-content:center;color:#222;padding-left:2px}
.baidu{position:absolute;left:1642px;top:175px;width:86px;height:37px;border-radius:7px 0 0 7px;background:#d6edfb;display:flex;overflow:hidden}
.baidu-logo{width:45px;background:#1e8cf0;display:flex;align-items:center;justify-content:center;flex:none}
.baidu-text{font-size:18px;line-height:37px;color:#84c5ee;padding-left:20px;white-space:nowrap}
.sogou{position:absolute;left:1477px;top:442px;width:251px;height:46px;display:flex;align-items:flex-start}
.sogou-logo{position:relative;z-index:1;flex:none}
.sogou-bar{margin-left:-4px;height:38px;margin-top:6px;flex:1;background:#f7fafd;box-shadow:0 1px 3px #bcc8d4;display:flex;align-items:center;padding-left:4px;font-size:22px;font-weight:700;color:#1a72c4;overflow:hidden;white-space:nowrap}
.so-item{width:36px;flex:none;display:flex;justify-content:center;align-items:center;line-height:26px}
.so-dot{font-size:20px}
.so-omega{font-size:24px}
.cursor{position:absolute;left:-1px;top:432px}
.share{position:absolute;left:419px;top:931px;width:891px;height:64px;background:#fff;box-shadow:0 1px 4px rgba(0,0,0,.4);display:flex;align-items:center;padding-left:15px}
.pause{width:9px;height:18px;border-left:3px solid #c6c6c6;border-right:3px solid #c6c6c6;margin-right:15px;flex:none}
.share-text{font-size:18.4px;color:#3c3c3c;white-space:nowrap;width:665px;flex:none}
.stop{width:120px;height:48px;background:#1a73e8;border-radius:6px;color:#fff;font-size:18px;display:flex;align-items:center;justify-content:center;flex:none}
.hide{font-size:18px;color:#5a91c8;margin-left:16px;white-space:nowrap}
```
